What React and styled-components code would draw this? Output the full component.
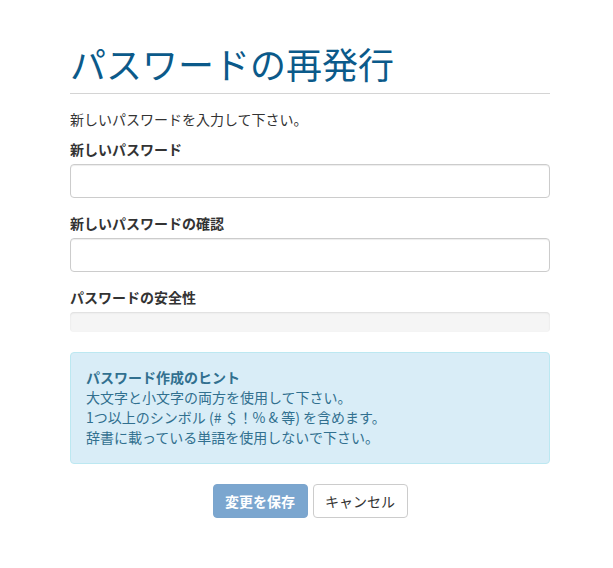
import React from 'react'
import styled, { createGlobalStyle } from 'styled-components'

const GlobalStyle = createGlobalStyle`
    * { box-sizing: border-box; }
    body {
        margin: 0;
        background: #fff;
        color: #333;
        font-family: "Noto Sans CJK JP", "Liberation Sans", sans-serif;
        font-size: 14px;
        line-height: 20px;
    }
`

const Container = styled.div`
    width: 480px;
    margin: 0 0 0 70px;
    padding-top: 43px;
`
const PageHeader = styled.div`
    padding-bottom: 10px;
    border-bottom: 1px solid #d4d4d4;
`
const Title = styled.h1`
    margin: 0;
    font-size: 36px;
    line-height: 40px;
    font-weight: 400;
    color: #0b5a8a;
`
const Intro = styled.p`
    margin: 15px 0 10px;
`
const FormGroup = styled.div`
    margin-bottom: 15px;
`
const Label = styled.label`
    display: block;
    font-weight: 700;
    margin-bottom: 5px;
`
const Input = styled.input`
    display: block;
    width: 100%;
    height: 34px;
    padding: 6px 12px;
    border: 1px solid #ccc;
    border-radius: 4px;
    box-shadow: inset 0 1px 1px rgba(0, 0, 0, 0.075);
    font: inherit;
    outline: none;
`
const Progress = styled.div`
    height: 20px;
    margin-bottom: 20px;
    background: #f5f5f5;
    border-radius: 4px;
    box-shadow: inset 0 1px 2px rgba(0, 0, 0, 0.1);
    overflow: hidden;
`
const Alert = styled.div`
    padding: 14px 15px 16px;
    margin-bottom: 20px;
    border: 1px solid #bce8f1;
    border-radius: 4px;
    background: #d9edf7;
    color: #31708f;
`
const AlertHeading = styled.div`
    font-weight: 700;
`
const Actions = styled.div`
    display: flex;
    justify-content: center;
    gap: 5px;
`
const Button = styled.button`
    width: 95px;
    height: 34px;
    padding: 0;
    white-space: nowrap;
    font: inherit;
    font-weight: ${p => p.primary ? 700 : 400};
    border-radius: 4px;
    border: 1px solid ${p => p.primary ? '#7ba5cd' : '#ccc'};
    background: ${p => p.primary ? '#7ba6cf' : '#fff'};
    color: ${p => p.primary ? '#fff' : '#333'};
    cursor: ${p => p.primary ? 'not-allowed' : 'pointer'};
`

function App() {
    return (
        <Container>
            <GlobalStyle />
            <PageHeader>
                <Title>パスワードの再発行</Title>
            </PageHeader>
            <Intro>新しいパスワードを入力して下さい。</Intro>
            <FormGroup>
                <Label>新しいパスワード</Label>
                <Input type="password" />
            </FormGroup>
            <FormGroup>
                <Label>新しいパスワードの確認</Label>
                <Input type="password" />
            </FormGroup>
            <Label>パスワードの安全性</Label>
            <Progress />
            <Alert>
                <AlertHeading>パスワード作成のヒント</AlertHeading>
                <div>大文字と小文字の両方を使用して下さい。</div>
                <div>1つ以上のシンボル (# ＄！% &amp; 等) を含めます。</div>
                <div>辞書に載っている単語を使用しないで下さい。</div>
            </Alert>
            <Actions>
                <Button primary>変更を保存</Button>
                <Button>キャンセル</Button>
            </Actions>
        </Container>
    )
}

export default App
